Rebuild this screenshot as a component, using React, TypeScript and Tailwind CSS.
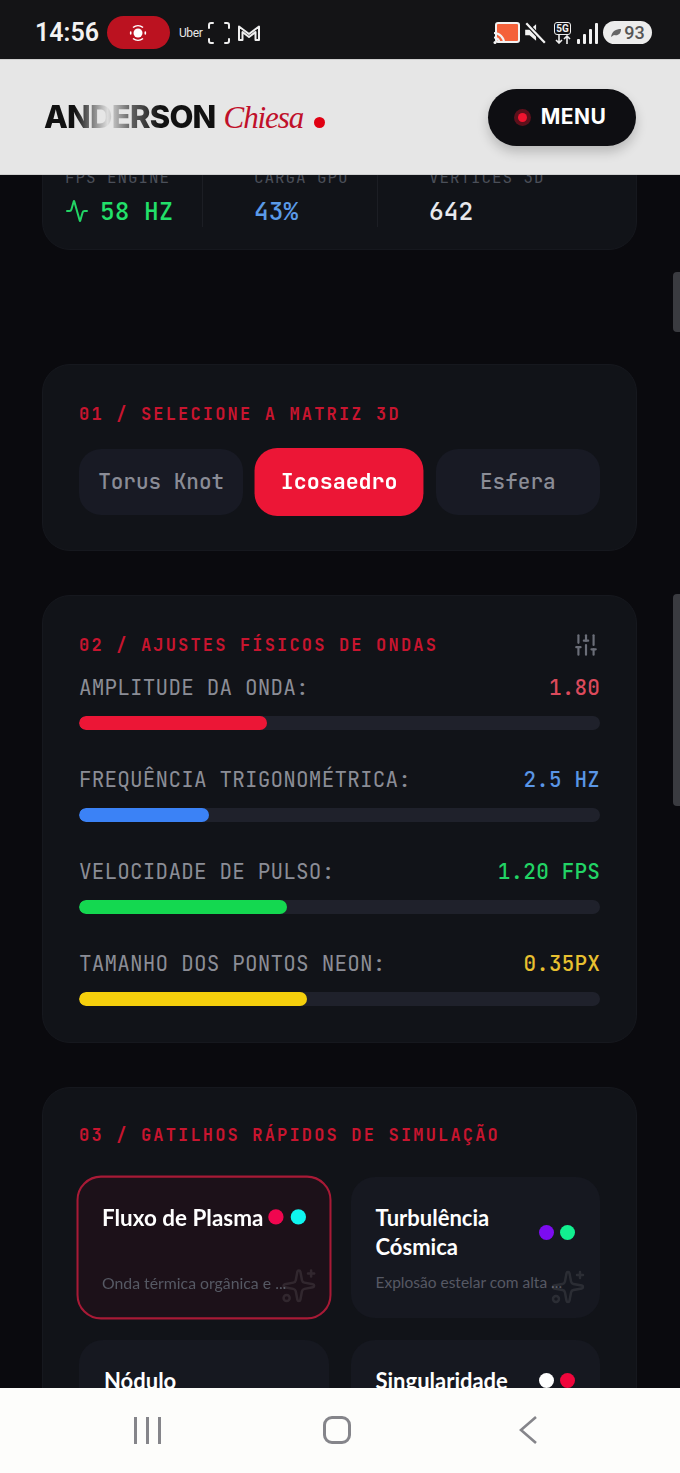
import { Activity, SlidersVertical, Sparkles } from "lucide-react";

const mono = "font-['JetBrains_Mono','DejaVu_Sans_Mono',monospace]";

const sliders = [
  { label: "AMPLITUDE DA ONDA:", value: "1.80", valueColor: "text-[#dc4a5c]", fill: "bg-[#ec1636]", width: "36%" },
  { label: "FREQUÊNCIA TRIGONOMÉTRICA:", value: "2.5 HZ", valueColor: "text-[#5a96e6]", fill: "bg-[#3b82f6]", width: "25%" },
  { label: "VELOCIDADE DE PULSO:", value: "1.20 FPS", valueColor: "text-[#22d465]", fill: "bg-[#14d850]", width: "40%" },
  { label: "TAMANHO DOS PONTOS NEON:", value: "0.35PX", valueColor: "text-[#e8c030]", fill: "bg-[#f5cf0c]", width: "43.8%" },
];

const triggers = [
  { title: ["Fluxo de Plasma"], desc: "Onda térmica orgânica e ...", a: "bg-[#f0064f]", b: "bg-[#0ff5f0]", active: true },
  { title: ["Turbulência", "Cósmica"], desc: "Explosão estelar com alta ...", a: "bg-[#7c0cf0]", b: "bg-[#12f090]", active: false },
  { title: ["Nódulo", "Magnético"], desc: "Campo denso em rotação", a: "bg-[#22c55e]", b: "bg-[#facc15]", active: false },
  { title: ["Singularidade"], desc: "Colapso gravitacional", a: "bg-[#ffffff]", b: "bg-[#f0063c]", active: false },
];

function StatusBar() {
  return (
    <div className="h-[59px] shrink-0 bg-[#141416] flex items-center justify-between pl-[35px] pr-[28px] pt-[6px]">
      <div className="flex items-center">
        <span className="text-[25px] font-semibold text-[#f2f2f2] font-['Roboto',sans-serif]">14:56</span>
        <div className="ml-[8px] w-[63px] h-[33px] rounded-full bg-[#bb1220] flex items-center justify-center">
          <svg width="20" height="20" viewBox="0 0 20 20" fill="none" stroke="#fff" strokeWidth="1.6">
            <circle cx="10" cy="10" r="4.5" fill="#fff" stroke="none" />
            <path d="M5 4.500a8 8 0 0 1 10 0M15 15.500a8 8 0 0 1-10 0" />
            <path d="M2.800 8.500a8 8 0 0 0 0 3M17.200 8.500a8 8 0 0 1 0 3" />
          </svg>
        </div>
        <span className="ml-[9px] text-[12px] tracking-[-0.4px] text-[#e8e8e8] font-['Roboto',sans-serif]">Uber</span>
        <svg className="ml-[5px]" width="24" height="24" viewBox="0 0 24 24" fill="none" stroke="#eee" strokeWidth="2" strokeLinecap="round">
          <path d="M2 7V4a2 2 0 0 1 2-2h2M18 2h2a2 2 0 0 1 2 2v3M22 18v2a2 2 0 0 1-2 2h-2M6 22H4a2 2 0 0 1-2-2v-2" />
        </svg>
        <svg className="ml-[6px]" width="24" height="20" viewBox="0 0 24 20" fill="none" stroke="#eee" strokeWidth="2" strokeLinejoin="round">
          <path d="M2 17V3.500L12 11l10-7.500V17h-3.500V9L12 14 5.500 9v8z" />
        </svg>
      </div>
      <div className="flex items-center">
        <svg width="28" height="24" viewBox="0 0 28 24" fill="none">
          <rect x="3" y="2" width="23" height="19" rx="2" fill="#f4613a" stroke="#f2f2f2" strokeWidth="2" />
          <path d="M1 12a10 10 0 0 1 10 10M1 16.500a5.500 5.500 0 0 1 5.500 5.500" stroke="#f2f2f2" strokeWidth="2.200" />
          <circle cx="2" cy="21.500" r="1.500" fill="#f2f2f2" />
        </svg>
        <svg className="ml-[2px]" width="24" height="24" viewBox="0 0 22 22" fill="#f2f2f2">
          <path d="M2 8h4l6-5v15l-6-5H2z" />
          <path d="M3 2l17 18" stroke="#141416" strokeWidth="4" />
          <path d="M3 2l17 18" stroke="#f2f2f2" strokeWidth="2" />
        </svg>
        <div className="ml-[6px] flex flex-col items-center w-[20px]">
          <span className="border border-[#eee] rounded-[3px] text-[10px] leading-[11px] font-bold text-[#f2f2f2] font-['Roboto',sans-serif] px-[1px]">5G</span>
          <svg width="18" height="9" viewBox="0 0 18 9" fill="none" stroke="#eee" strokeWidth="1.600">
            <path d="M5 0v8M2 5l3 3 3-3M13 9V1M10 4l3-3 3 3" />
          </svg>
        </div>
        <div className="ml-[4px] flex items-end gap-[2.500px] h-[22px]">
          <div className="w-[3.500px] h-[5px] bg-[#f2f2f2] rounded-[1px]" />
          <div className="w-[3.500px] h-[10px] bg-[#f2f2f2] rounded-[1px]" />
          <div className="w-[3.500px] h-[15px] bg-[#f2f2f2] rounded-[1px]" />
          <div className="w-[3.500px] h-[21px] bg-[#f2f2f2] rounded-[1px]" />
        </div>
        <div className="ml-[5px] w-[49px] h-[23px] rounded-full bg-[#ececec] flex items-center justify-center gap-[2px]">
          <svg width="12" height="10" viewBox="0 0 12 10" fill="#666">
            <path d="M1 9C2 3 6 1 11 1c0 5-3 7-7 6z" />
          </svg>
          <span className="text-[18px] leading-none font-medium text-[#555] font-['Roboto',sans-serif]">93</span>
        </div>
      </div>
    </div>
  );
}

function Header() {
  return (
    <header className="h-[116px] shrink-0 bg-[#e6e6e6] border-y border-[#cfcfcf] flex items-center justify-between pl-[44px] pr-[44px] relative z-10">
      <div className="flex items-baseline">
        <span className="text-[31px] font-extrabold tracking-[-0.750px] font-['Inter',sans-serif] bg-[linear-gradient(90deg,#111_0%,#111_18%,#ddd_37%,#666_50%,#111_68%,#111_100%)] bg-clip-text text-transparent">ANDERSON</span>
        <span className="ml-[8px] text-[31px] tracking-[-1.100px] italic text-[#c0102a] font-['Liberation_Serif',serif] leading-none">Chiesa</span>
        <span className="ml-[11px] w-[11px] h-[11px] rounded-full bg-[#e00012]" />
      </div>
      <button className="w-[148px] h-[57px] rounded-full bg-[#0e0e12] shadow-[0_6px_12px_rgba(0,0,0,0.2)] flex items-center justify-center gap-[14px]">
        <span className="w-[9px] h-[9px] rounded-full bg-[#f0142f] shadow-[0_0_0_4px_rgba(240,20,47,0.35)]" />
        <span className="text-[21px] font-bold text-white font-['Inter',sans-serif] tracking-[0.500px]">MENU</span>
      </button>
    </header>
  );
}

function Card({ children, className }: { children: React.ReactNode; className?: string }) {
  return (
    <section className={`ml-[42px] mr-[43px] rounded-[28px] bg-[#111318] border border-[#16181e] shrink-0 ${className ?? ""}`}>
      {children}
    </section>
  );
}

function SectionTitle({ children }: { children: string }) {
  return (
    <h2 className={`${mono} text-[17px] leading-[24px] font-bold tracking-[2.180px] text-[#c8152f]`}>{children}</h2>
  );
}

function Stat({ label, value, color, icon, className }: { label: string; value: string; color: string; icon?: boolean; className: string }) {
  return (
    <div className={className}>
      <div className={`${mono} text-[16px] leading-[22px] tracking-[0.900px] text-[#4b4f59]`}>{label}</div>
      <div className={`mt-[6px] flex items-center gap-[11px] text-[24.500px] leading-[32px] font-medium ${mono} ${color}`}>
        {icon && <Activity size={24} strokeWidth={2} className="text-[#22d465]" />}
        {value}
      </div>
    </div>
  );
}

function TriggerCard({ item }: { item: (typeof triggers)[number] }) {
  const single = item.title.length === 1;
  return (
    <div
      className={`relative h-[141px] rounded-[24px] ${
        item.active
          ? "scale-[1.02] border-2 border-[#a81a36] bg-[#1c1119] px-[23px] pt-[25px]"
          : "bg-[#161820] px-[25px] pt-[27px]"
      }`}
    >
      <div className="flex items-center justify-between h-[58px] -mt-[1px]">
        <div className={`text-[22px] leading-[29px] font-bold text-white font-['Lato',sans-serif] ${single ? "self-start" : ""}`}>
          {item.title.map((line) => (
            <div key={line}>{line}</div>
          ))}
        </div>
        <div className={`flex gap-[6.500px] shrink-0 ${single ? "self-start mt-[7px]" : ""}`}>
          <span className={`w-[15px] h-[15px] rounded-full ${item.a}`} />
          <span className={`w-[15px] h-[15px] rounded-full ${item.b}`} />
        </div>
      </div>
      <p className="mt-[10px] whitespace-nowrap text-[15.500px] leading-[22px] text-[#565964] font-['Lato',sans-serif]">{item.desc}</p>
      <Sparkles
        size={36}
        strokeWidth={1.6}
        className={`absolute bottom-[13px] text-white opacity-[0.09] ${item.active ? "right-[12px]" : "right-[14px]"}`}
      />
    </div>
  );
}

function NavBar() {
  return (
    <div className="h-[85px] shrink-0 bg-[#fdfdfb] flex items-start pt-[28px] relative z-10">
      <div className="w-full flex justify-between items-center pl-[134px] pr-[142px] h-[28px]">
        <div className="flex gap-[9px]">
          <div className="w-[3px] h-[27px] bg-[#85858a]" />
          <div className="w-[3px] h-[27px] bg-[#85858a]" />
          <div className="w-[3px] h-[27px] bg-[#85858a]" />
        </div>
        <div className="-ml-[6px] w-[28px] h-[28px] rounded-[9px] border-[3px] border-[#85858a]" />
        <svg width="20" height="30" viewBox="0 0 20 30" fill="none" stroke="#85858a" strokeWidth="2.600">
          <path d="M18 2 3 15l15 13" />
        </svg>
      </div>
    </div>
  );
}

export default function App() {
  return (
    <div className="w-[680px] h-[1473px] flex flex-col overflow-hidden bg-[#0a0a0e]">
      <StatusBar />
      <Header />
      <main className="relative flex-1 min-h-0 overflow-hidden flex flex-col gap-[44px]">
        <Card className="-mt-[41px] mb-[70px] h-[116px] pl-[22px] pt-[9px] flex items-center">
          <div className="flex items-center w-full">
            <Stat label="FPS ENGINE" value="58 HZ" color="text-[#22e06a]" icon className="w-[138px] border-r border-[#1c1e24]" />
            <Stat label="CARGA GPU" value="43%" color="text-[#5a9ae8]" className="w-[175px] pl-[51px] border-r border-[#1c1e24]" />
            <Stat label="VÉRTICES 3D" value="642" color="text-[#e8e8ec]" className="pl-[51px]" />
          </div>
        </Card>

        <Card className="px-[36px] pt-[37px] pb-[35px]">
          <SectionTitle>01 / SELECIONE A MATRIZ 3D</SectionTitle>
          <div className="mt-[23px] grid grid-cols-3 gap-[14px]">
            <button className={`${mono} h-[66px] rounded-[22px] bg-[#181a24] text-[21px] font-medium text-[#8a8c96]`}>Torus Knot</button>
            <button className={`${mono} h-[66px] rounded-[22px] bg-[#ec1636] text-[21px] font-bold text-white scale-[1.03]`}>Icosaedro</button>
            <button className={`${mono} h-[66px] rounded-[22px] bg-[#181a24] text-[21px] font-medium text-[#8a8c96]`}>Esfera</button>
          </div>
        </Card>

        <Card className="px-[36px] pt-[36px] pb-[36px]">
          <div className="flex items-center justify-between">
            <SectionTitle>02 / AJUSTES FÍSICOS DE ONDAS</SectionTitle>
            <SlidersVertical size={26} strokeWidth={2} className="text-[#6b6e78] mr-[1px]" />
          </div>
          <div className="mt-[16px] flex flex-col gap-[36px]">
            {sliders.map((s) => (
              <div key={s.label}>
                <div className={`${mono} flex justify-between text-[21px] leading-[28px] tracking-[0.170px]`}>
                  <span className="text-[#8b8d96]">{s.label}</span>
                  <span className={`font-medium ${s.valueColor}`}>{s.value}</span>
                </div>
                <div className="mt-[14px] h-[14px] rounded-full bg-[#1f212b] overflow-hidden">
                  <div className={`h-full rounded-full ${s.fill}`} style={{ width: s.width }} />
                </div>
              </div>
            ))}
          </div>
        </Card>

        <Card className="px-[36px] pt-[35px] pb-[36px]">
          <SectionTitle>03 / GATILHOS RÁPIDOS DE SIMULAÇÃO</SectionTitle>
          <div className="mt-[30px] grid grid-cols-2 gap-x-[22px] gap-y-[22px]">
            {triggers.map((t) => (
              <TriggerCard key={t.title[0]} item={t} />
            ))}
          </div>
        </Card>

        {/* overlay scrollbars from the screen recording */}
        <div className="absolute right-0 top-[97px] w-[7px] h-[60px] rounded-l-[4px] bg-[#3a3b40]" />
        <div className="absolute right-0 top-[419px] w-[7px] h-[212px] rounded-l-[4px] bg-[#3a3b40]" />
      </main>
      <NavBar />
    </div>
  );
}
